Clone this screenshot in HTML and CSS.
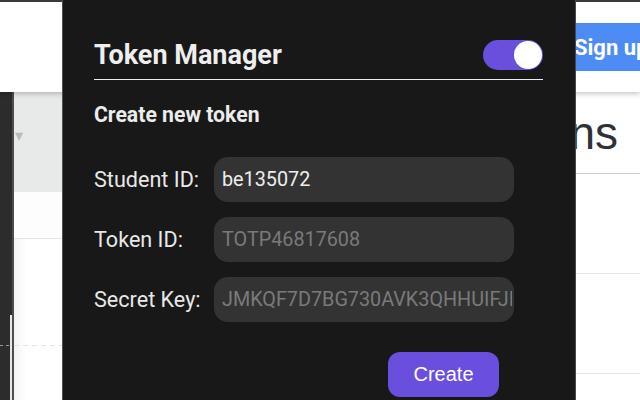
FILE: index.html
```html
<!DOCTYPE html>
<html lang="en">
<head>
<meta charset="utf-8">
<title>Token Manager</title>
<link rel="stylesheet" href="styles.css">
</head>
<body>
<div class="page">
  <div class="top-strip"></div>
  <header class="site-header">
    <button class="signup" type="button">Sign up</button>
  </header>
  <div class="site-body">
    <aside class="side-rail">
      <span class="rail-dash"></span>
      <span class="rail-line"></span>
    </aside>
    <div class="left-col">
      <div class="left-banner"><span class="caret">▾</span></div>
      <div class="left-row"></div>
      <div class="left-rest"><div class="dash"></div></div>
    </div>
    <div class="right-col">
      <h1 class="page-title">Tokens</h1>
      <div class="list-row"></div>
      <div class="list-row"></div>
      <div class="list-row"></div>
    </div>
  </div>
</div>

<section class="popup">
  <div class="popup-head">
    <h2 class="popup-title">Token Manager</h2>
    <span class="toggle"><span class="knob"></span></span>
  </div>
  <h3 class="section-title">Create new token</h3>
  <form class="token-form">
    <div class="field">
      <label class="field-label">Student ID:</label>
      <input class="field-input" type="text" value="be135072">
    </div>
    <div class="field">
      <label class="field-label">Token ID:</label>
      <input class="field-input" type="text" placeholder="TOTP46817608">
    </div>
    <div class="field">
      <label class="field-label">Secret Key:</label>
      <input class="field-input" type="text" placeholder="JMKQF7D7BG730AVK3QHHUIFJIX">
    </div>
    <div class="actions">
      <button class="create-btn" type="button">Create</button>
    </div>
  </form>
</section>
</body>
</html>
```

FILE: styles.css
```css
* { box-sizing: border-box; }

html, body {
  margin: 0;
  padding: 0;
  width: 640px;
  height: 400px;
  overflow: hidden;
  background: #ffffff;
  font-family: "Liberation Sans", Arial, sans-serif;
}

.page {
  width: 640px;
  height: 400px;
  display: flex;
  flex-direction: column;
  overflow: hidden;
}

.top-strip {
  height: 2px;
  background: #3d3d3d;
  flex: none;
}

.site-header {
  height: 90px;
  flex: none;
  background: #ffffff;
  display: flex;
  align-items: center;
  padding-left: 561px;
  box-shadow: 0 2px 5px rgba(0, 0, 0, 0.22);
  position: relative;
  z-index: 1;
  overflow: hidden;
}

.signup {
  flex: none;
  height: 48px;
  padding: 0 16px 0 13px;
  border: none;
  border-radius: 4px;
  background: #4d8cf5;
  color: #ffffff;
  font-family: Roboto, "Liberation Sans", sans-serif;
  font-weight: 700;
  font-size: 22px;
  white-space: nowrap;
}

.site-body {
  flex: 1;
  display: grid;
  grid-template-columns: 14px 360px 1fr;
  min-height: 0;
}

.side-rail {
  background: #2c2c2c;
  border-right: 2px solid #4d4d4d;
  display: flex;
  flex-direction: column;
}

.rail-dash {
  margin-top: 253px;
  height: 1px;
  margin-right: 2px;
  background: repeating-linear-gradient(90deg, #9a9a9a 0 3px, transparent 3px 6px);
}

.rail-line {
  flex: 1;
  margin-top: -31px;
  margin-left: 10px;
  width: 2px;
  background: #e6e6e6;
}

.left-col {
  display: flex;
  flex-direction: column;
}

.left-banner {
  height: 100px;
  background: #e8e9e9;
  padding: 34px 0 0 1px;
}

.caret {
  color: #b9bbbb;
  font-size: 16px;
}

.left-row {
  height: 47px;
  background: #fdfdfd;
  border-bottom: 1px solid #e4e4e4;
}

.left-rest {
  flex: 1;
  background: linear-gradient(90deg, #f2f2f2 0, #ffffff 12px);
  padding-top: 106px;
}

.dash {
  height: 1px;
  background: repeating-linear-gradient(90deg, #e4e4e4 0 5px, transparent 5px 9px);
}

.right-col {
  display: flex;
  flex-direction: column;
  min-width: 0;
}

.page-title {
  margin: 0;
  padding: 18px 22px 17px 0;
  height: 82px;
  line-height: 46px;
  font-size: 46px;
  font-weight: 400;
  color: #2f3134;
  text-align: right;
  white-space: nowrap;
  border-bottom: 1px solid #cfcfcf;
}

.list-row {
  height: 100px;
  flex: none;
  border-bottom: 1px solid #e6e6e6;
}

/* Popup */
.popup {
  position: absolute;
  top: 0;
  left: 62px;
  width: 514px;
  height: 400px;
  overflow: hidden;
  background: #181818;
  border-left: 1px solid #505050;
  border-right: 1px solid #4a4a4a;
  padding: 40px 32px 0 31px;
  font-family: Roboto, "Liberation Sans", sans-serif;
  color: #ececec;
  z-index: 5;
}

.popup-head {
  display: flex;
  align-items: center;
  justify-content: space-between;
  padding-bottom: 9px;
  border-bottom: 1px solid #ececec;
}

.popup-title {
  margin: 0;
  font-size: 27px;
  line-height: 30px;
  font-weight: 700;
  color: #eeeeee;
}

.toggle {
  width: 60px;
  height: 30px;
  border-radius: 15px;
  background: #6a4fdd;
  display: flex;
  align-items: center;
  justify-content: flex-end;
  padding: 0 1px;
}

.knob {
  width: 28px;
  height: 28px;
  border-radius: 50%;
  background: #ffffff;
}

.section-title {
  margin: 23px 0 0;
  font-size: 21.2px;
  line-height: 24px;
  font-weight: 700;
  color: #ececec;
}

.token-form {
  margin-top: 30px;
  display: flex;
  flex-direction: column;
  gap: 15px;
}

.field {
  display: flex;
  align-items: center;
  height: 45px;
}

.field-label {
  width: 120px;
  flex: none;
  font-size: 21.6px;
  color: #e8e8e8;
}

.field-input {
  width: 300px;
  height: 45px;
  border: none;
  border-radius: 14px;
  background: #333333;
  padding: 0 2px 0 8px;
  font-family: Roboto, "Liberation Sans", sans-serif;
  font-size: 19.8px;
  color: #eeeeee;
  outline: none;
}

.field-input::placeholder {
  color: #7a7a7a;
}

.actions {
  display: flex;
  justify-content: flex-end;
  padding-right: 44px;
  margin-top: 15px;
}

.create-btn {
  height: 45px;
  width: 111px;
  border: none;
  border-radius: 12px;
  background: #6a4fdf;
  color: #ffffff;
  font-family: "Liberation Sans", Arial, sans-serif;
  font-size: 20px;
  padding: 0;
}
```
